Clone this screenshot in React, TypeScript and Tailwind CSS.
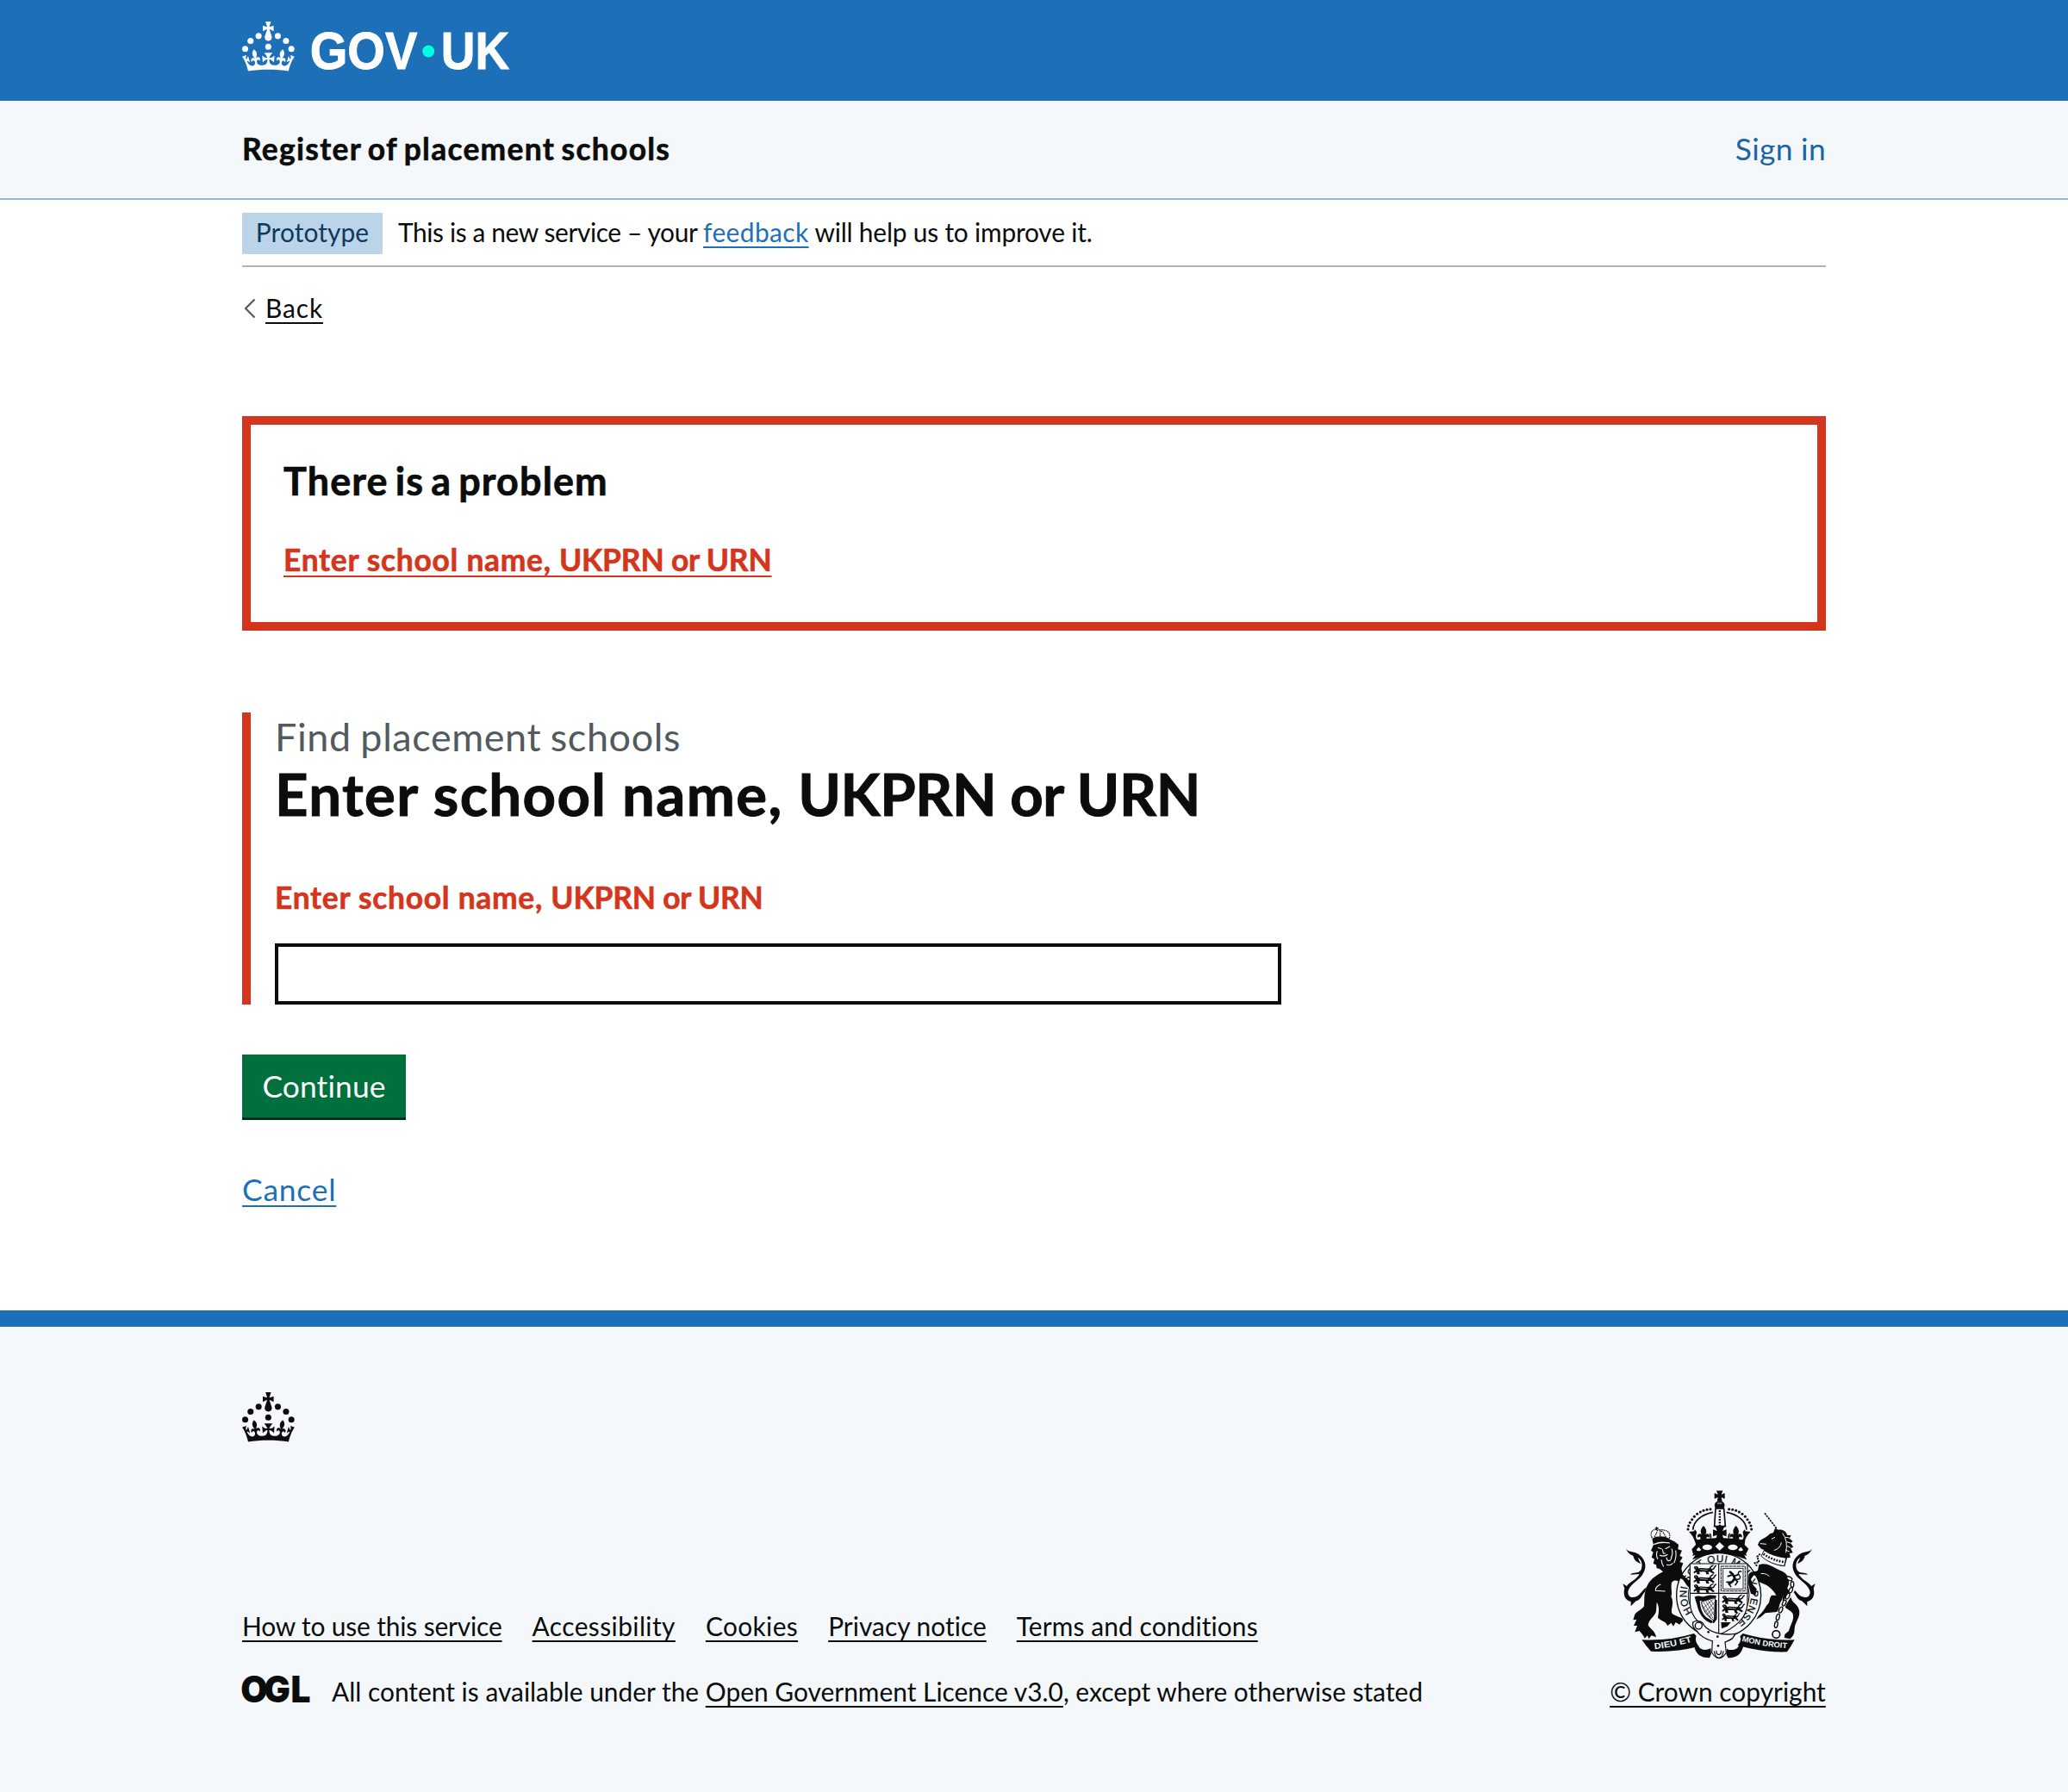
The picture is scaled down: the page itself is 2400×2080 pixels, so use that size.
import type { ReactNode } from 'react';

const CROWN =
  'M33.1,9.8c.2-.1.3-.3.5-.5l4.6,2.4v-6.8l-4.6,1.5c-.1-.2-.3-.3-.5-.5l1.9-5.9h-6.7l1.9,5.9c-.2.1-.3.3-.5.5l-4.6-1.5v6.8l4.6-2.4c.1.2.3.3.5.5l-2.6,8c-.9,2.8,1.2,5.7,4.1,5.7h0c3,0,5.1-2.9,4.1-5.7l-2.6-8ZM37,37.9s-3.4,3.8-4.1,6.1c2.2,0,4.2-.5,6.4-2.8l-.7,8.5c-2-2.8-4.4-4.1-5.7-3.8.1,3.1.5,6.7,5.8,7.2,3.7.3,6.7-1.5,7-3.8.4-2.6-2-4.3-3.7-1.6-1.4-4.5,2.4-6.1,4.9-3.2-1.9-4.5-1.8-7.7,2.4-10.9,3,4,2.6,7.3-1.2,11.1,2.4-1.3,6.2,0,4,4.6-1.2-2.8-3.7-2.2-4.2.2-.3,1.7.7,3.7,3,4.2,1.9.3,4.7-.9,7-5.9-1.3,0-2.4.7-3.9,1.7l2.4-8c.6,2.3,1.4,3.7,2.2,4.5.6-1.6.5-2.8,0-5.3l5,1.8c-2.6,3.6-5.2,8.7-7.3,17.5-7.4-1.1-15.7-1.7-24.5-1.7h0c-8.8,0-17.1.6-24.5,1.7-2.1-8.9-4.7-13.9-7.3-17.5l5-1.8c-.5,2.5-.6,3.7,0,5.3.8-.8,1.6-2.3,2.2-4.5l2.4,8c-1.5-1-2.6-1.7-3.9-1.7,2.3,5,5.2,6.2,7,5.9,2.3-.4,3.3-2.4,3-4.2-.5-2.4-3-3.1-4.2-.2-2.2-4.6,1.6-6,4-4.6-3.7-3.7-4.2-7.1-1.2-11.1,4.2,3.2,4.3,6.4,2.4,10.9,2.5-2.8,6.3-1.3,4.9,3.2-1.8-2.7-4.1-1-3.7,1.6.3,2.3,3.3,4.1,7,3.8,5.4-.5,5.7-4.2,5.8-7.2-1.3-.2-3.7,1-5.7,3.8l-.7-8.5c2.2,2.3,4.2,2.7,6.4,2.8-.7-2.3-4.1-6.1-4.1-6.1h10.6,0Z';

function CrownShapes() {
  return (
    <g>
      <circle cx="20" cy="17.6" r="3.7" />
      <circle cx="10.2" cy="23.5" r="3.7" />
      <circle cx="3.7" cy="33.2" r="3.7" />
      <circle cx="31.7" cy="30.6" r="3.7" />
      <circle cx="43.3" cy="17.6" r="3.7" />
      <circle cx="53.2" cy="23.5" r="3.7" />
      <circle cx="59.7" cy="33.2" r="3.7" />
      <path d={CROWN} />
    </g>
  );
}

function GovLogo() {
  return (
    <svg viewBox="0 0 324 60" className="block h-[57.45px] w-[310px] overflow-visible" fill="#fff" aria-label="GOV.UK">
      <CrownShapes />
      <g fontFamily="'Liberation Sans', Arial, sans-serif" fontWeight="700" fontSize="63.6" stroke="#fff" strokeWidth=".9">
        <text x="82.2" y="57.7" textLength="130.5" lengthAdjust="spacingAndGlyphs">GOV</text>
        <text x="241.2" y="57.7" textLength="83" lengthAdjust="spacingAndGlyphs">UK</text>
      </g>
      <circle cx="226" cy="36" r="7.3" fill="#00ffe0" />
    </svg>
  );
}

function OglLogo() {
  return (
    <svg viewBox="0 0 79 32" className="block h-8 w-[79px] shrink-0 overflow-visible" fill="#0b0c0c">
      <text
        x="-1.8 26 58.5"
        y="31.2"
        fontFamily="Inter, sans-serif"
        fontWeight="900"
        fontSize="42"
        transform="scale(.967 1)"
      >
        OGL
      </text>
    </svg>
  );
}

/* A passant lion reduced to a heraldic squiggle, about 80 units wide. */
function Passant({ x, y }: { x: number; y: number }) {
  return (
    <g transform={`translate(${x} ${y}) scale(1.02 1.12)`}>
      <path d="M4,6 C2,0 10,-3 16,1 L20,7 C32,3 44,9 56,6 C62,4 66,8 66,14 L74,20 L70,24 L58,17 L52,18 L56,25 L46,25 L44,18 C36,16 28,18 22,17 L24,25 L14,25 L13,18 L4,22 L2,18 L10,12 Z" />
      <path d="M64,10 C78,10 70,-2 80,-1 M58,6 C62,-3 70,0 68,-4" fill="none" stroke="#0b0c0c" strokeWidth="4" />
      <path d="M24,10 L50,12 M8,3 L13,6" stroke="#f4f8fb" strokeWidth="1.6" />
    </g>
  );
}

const BEADS: [number, number][] = [
  [297, 194], [299, 182], [304, 171], [311, 160], [319, 150], [329, 141], [340, 134], [351, 129], [363, 126], [375, 124],
];

function HalfCrown() {
  return (
    <g>
      {BEADS.map(([x, y]) => (
        <circle key={x} cx={x} cy={y} r="4.6" />
      ))}
      <path d="M314,196 C316,166 344,142 384,135" fill="none" stroke="#0b0c0c" strokeWidth="5" />
      <path d="M300,203 l18,-2 3,-6 6,8 c0,10 -4,12 -2,22 c3,8 14,10 16,0 c-2,-6 -9,-6 -10,0 c-5,-12 6,-20 13,-12 c-6,-12 -2,-22 7,-31 c9,9 13,19 7,31 c7,-8 18,0 13,12 c-1,-6 -8,-6 -10,0 c2,10 16,8 18,-4 c0,-10 -4,-12 -8,-14 L378,240 H322 C318,226 312,214 300,203 Z" />
    </g>
  );
}

function RoyalArms() {
  return (
    <svg viewBox="60 50 690 610" className="block h-[203.3px] w-[230px]" fill="#0b0c0c">
      <defs>
        <path id="garter" d="M313,484 A112,112 0 1 1 461,517" />
        <path id="motto-left" d="M181,612 Q250,604 314,585" />
        <path id="motto-right" d="M484,583 Q560,604 646,609" />
      </defs>

      {/* crown */}
      <path d="M396,60 h22 l-5,13 12,-5 v20 l-12,-5 3,14 h-18 l3,-14 -12,5 v-20 l12,5 Z" />
      <path d="M407,96 c18,0 21,16 14,26 h-28 c-7,-10 -4,-26 14,-26 Z" />
      <path d="M399,104 h16" stroke="#f4f8fb" strokeWidth="2.5" />
      <HalfCrown />
      <g transform="matrix(-1 0 0 1 815 0)">
        <HalfCrown />
      </g>
      <path d="M393,122 h29 l5,62 h-38 Z" fill="#f4f8fb" stroke="#0b0c0c" strokeWidth="5" />
      <path d="M407.500,128 V182" stroke="#0b0c0c" strokeWidth="7" strokeDasharray="6 4" />
      <path d="M392,184 h32 l-7,16 14,-5 v24 l-14,-5 6,22 h-31 l6,-22 -14,5 v-24 l14,5 Z" />
      <path d="M322,232 Q408,216 496,232 L494,248 508,262 500,278 Q408,286 314,278 L310,264 324,248 Z" />
      <path d="M328,276 Q408,266 488,276 L502,300 Q408,260 312,300 Z" />
      <g fill="#f4f8fb">
        <path d="M326,266 l8,-10 9,9 -8,9 Z M392,254 l15,-15 16,15 -16,14 Z M472,265 l9,-9 8,10 -9,8 Z" />
        <ellipse cx="364" cy="257" rx="17" ry="10" />
        <ellipse cx="453" cy="257" rx="17" ry="10" />
      </g>

      {/* lion */}
      <g>
        <path d="M80,262 C92,276 112,270 126,282 C154,304 154,332 136,356 C118,376 92,390 88,412 C88,428 100,436 118,428 C132,422 140,404 152,396 L148,410 C136,424 132,440 116,444 L98,462 98,446 C78,440 70,424 76,400 L70,384 84,392 C92,378 118,370 128,350 L96,352 C106,340 124,352 134,334 C140,318 136,300 122,292 L132,314 C116,308 108,298 106,286 C96,284 88,276 80,262 Z" />
        <path d="M178,246 L168,268 176,274 170,292 180,298 176,314 186,318 188,330 198,332 210,342 C188,354 168,366 156,388 C142,414 146,438 144,462 C136,474 122,478 112,490 L106,510 118,508 108,530 120,530 112,552 128,548 C136,558 144,566 146,574 L156,564 160,576 170,564 186,570 C184,550 166,542 158,528 C160,508 182,498 186,480 L188,448 C200,466 194,488 192,502 C206,516 218,512 226,530 L238,520 246,532 254,518 268,526 C274,516 284,516 276,504 C262,496 244,494 240,484 C238,466 250,452 238,428 C244,416 236,402 240,380 C252,366 262,376 276,380 L288,396 C298,406 312,406 318,396 L304,388 316,380 300,374 C286,362 276,348 274,330 L280,312 268,308 278,292 268,286 276,268 262,264 264,248 252,238 236,230 Z" />
        <path d="M172,226 Q200,212 232,226 L236,240 Q204,232 176,246 Z" />
        <path d="M172,224 C162,206 174,192 190,196 M232,226 C238,206 226,194 192,196 M180,222 q10,-20 12,-26 M220,222 q-8,-20 -24,-26 M200,218 v-20" fill="none" stroke="#0b0c0c" strokeWidth="3.5" strokeDasharray="5 2.500" />
        <path d="M188,186 v12 M182,191 h12" stroke="#0b0c0c" strokeWidth="4" />
      </g>
      <path
        d="M192,258 l14,5 M218,262 l16,-8 M208,264 l3,14 8,0 M198,284 q14,8 28,-2 M190,270 q-6,16 2,28 M240,262 q6,16 -2,32 M222,292 c2,16 14,16 18,0 M204,300 q2,16 8,24 M254,268 q4,24 -6,44 M222,318 q16,4 22,-6 M202,386 q-20,8 -18,22 l34,2 M178,247 q26,-10 56,-5"
        fill="none"
        stroke="#f4f8fb"
        strokeWidth="3.4"
      />

      {/* unicorn */}
      <path d="M564,138 L606,192" stroke="#0b0c0c" strokeWidth="5" strokeDasharray="7 3" />
      <path d="M540,248 L546,236 C556,226 570,224 582,210 L594,206 600,190 612,196 C632,194 640,206 642,214 L656,216 650,226 662,236 654,242 664,256 654,260 662,276 650,278 654,292 642,294 L634,324 C600,320 570,306 552,286 L562,266 552,262 Z" />
      <path d="M544,318 C566,308 588,322 614,336 C642,346 650,362 648,386 C640,410 628,420 624,440 C612,456 616,474 606,482 L566,486 550,500 534,508 544,494 C562,480 566,464 574,456 C584,446 578,436 588,424 L604,424 C594,404 574,388 556,382 C540,378 530,362 524,352 L516,368 524,388 536,402 532,428 516,418 506,382 508,352 C516,336 532,344 540,338 Z" />
      <path d="M640,396 C656,414 650,432 664,448 C682,462 690,478 682,500 L670,528 C666,546 670,556 660,568 L652,576 632,572 634,560 648,548 C654,524 668,510 662,488 C654,474 638,474 630,458 C622,440 628,420 640,396 Z" />
      <path d="M730,262 C718,276 698,270 684,282 C656,304 656,332 674,356 C692,376 718,390 722,412 C722,428 710,436 692,428 C678,422 670,404 658,396 L662,410 C674,424 678,440 694,444 L712,462 712,446 C732,440 740,424 734,400 L740,384 726,392 C718,378 692,370 682,350 L714,352 C704,340 686,352 676,334 C670,318 674,300 688,292 L678,314 C694,308 702,298 704,286 C714,284 722,276 730,262 Z" />
      <path
        d="M588,228 l12,-6 M548,244 l22,2 M626,208 q20,26 12,68 M636,222 l14,2 M640,238 l14,4 M640,252 l14,6 M636,266 l14,6 M596,268 q24,-8 26,-28 M540,352 q24,-10 40,6"
        fill="none"
        stroke="#f4f8fb"
        strokeWidth="3"
      />
      <path d="M562,268 q30,20 76,26 l-6,28 q-50,-6 -80,-34 Z" fill="#f4f8fb" stroke="#0b0c0c" strokeWidth="2.500" />
      <path d="M560,280 q30,22 72,28" strokeWidth="8" strokeDasharray="5 5" fill="none" stroke="#0b0c0c" />
      <path d="M548,280 l-10,10 6,18 -14,4 8,12" strokeWidth="6" strokeDasharray="6 3" fill="none" stroke="#0b0c0c" />
      <path d="M648,356 C672,370 670,400 652,420 C632,450 610,490 606,540" strokeWidth="15" stroke="#f4f8fb" fill="none" />
      <g fill="#f4f8fb" stroke="#0b0c0c" strokeWidth="4">
        <ellipse cx="650" cy="366" rx="10" ry="6" transform="rotate(30 650 366)" />
        <ellipse cx="660" cy="386" rx="5.500" ry="10" />
        <ellipse cx="655" cy="406" rx="5.500" ry="10" transform="rotate(25 655 406)" />
        <ellipse cx="644" cy="427" rx="5.500" ry="11" transform="rotate(28 644 427)" />
        <ellipse cx="632" cy="451" rx="5.500" ry="11" transform="rotate(24 632 451)" />
        <ellipse cx="620" cy="475" rx="5.500" ry="11" transform="rotate(24 620 475)" />
        <ellipse cx="610" cy="500" rx="5.500" ry="11" transform="rotate(16 610 500)" />
        <ellipse cx="604" cy="526" rx="5.500" ry="11" transform="rotate(10 604 526)" />
        <circle cx="604" cy="560" r="13" strokeWidth="5" />
      </g>

      {/* garter */}
      <circle cx="404" cy="424" r="147" fill="#f4f8fb" stroke="#0b0c0c" strokeWidth="4" />
      <circle cx="404" cy="424" r="106" fill="none" stroke="#0b0c0c" strokeWidth="3" />
      <text fontFamily="'Liberation Sans', sans-serif" fontSize="35" stroke="#0b0c0c" strokeWidth=".8">
        <textPath href="#garter" textLength="532">HONI SOIT QUI MAL Y PENSE</textPath>
      </text>
      <path d="M312,286 L320,270 H494 L502,286 Q408,262 312,286 Z" />
      <path d="M238,362 C256,356 268,364 280,370 L292,388 C300,398 312,404 318,394 L306,386 318,380 300,372 C286,362 278,350 266,340 Z M508,352 C516,336 532,344 548,338 L556,370 L526,354 516,368 524,388 536,402 532,424 516,418 506,382 Z" />

      {/* shield */}
      <path d="M304,314 H504 V452 C502,504 462,536 404,562 C346,536 306,504 304,452 Z" fill="#f4f8fb" stroke="#0b0c0c" strokeWidth="3.500" />
      <path d="M404,314 V558 M304,417 H504" stroke="#0b0c0c" strokeWidth="3.500" />
      <Passant x={314} y={323} />
      <Passant x={314} y={355} />
      <Passant x={314} y={387} />
      <Passant x={413} y={426} />
      <Passant x={413} y={457} />
      <g transform="translate(413 488) scale(.8 .95)">
        <Passant x={0} y={0} />
      </g>
      <path d="M412,518 h34 l-12,14 -20,8 Z" />
      <rect x="412" y="323" width="84" height="86" fill="none" stroke="#0b0c0c" strokeWidth="3" strokeDasharray="12 2" />
      <rect x="419" y="330" width="70" height="72" fill="none" stroke="#0b0c0c" strokeWidth="2.500" />
      <g fill="none" stroke="#0b0c0c" strokeLinecap="round" strokeLinejoin="round">
        <path d="M444,343 L452,350 460,364 452,376 440,384" strokeWidth="8" />
        <path d="M456,358 L472,352 M454,352 L436,358 M458,368 L470,376 462,388 M446,378 L432,378 M440,384 L446,394" strokeWidth="5" />
        <path d="M464,368 C480,372 482,360 474,352 C468,344 478,338 482,342" strokeWidth="4" />
      </g>
      <path d="M320,430 c12,-8 22,2 34,-2 c14,-6 30,-6 42,-2 l-4,10 c-14,-4 -22,2 -30,6 c-10,4 -16,2 -24,0 c2,28 8,44 22,58 l24,14 -6,8 c-26,-10 -44,-34 -50,-66 Z" />
      <path d="M344,446 L392,432 L388,512 C364,498 346,474 344,446 Z" fill="#f4f8fb" stroke="#0b0c0c" strokeWidth="3" />
      <path d="M350,446 L384,504 M358,442 L388,494 M366,440 L388,476 M374,438 L389,460 M346,458 L376,502 M392,432 L348,470 M392,446 L354,484 M390,462 L362,492 M390,478 L370,500" stroke="#0b0c0c" strokeWidth="1.800" />
      <path d="M394,440 v66 l-10,14" fill="none" stroke="#0b0c0c" strokeWidth="7" />

      {/* scroll */}
      <path d="M136,579 Q230,584 318,557 L326,566 Q318,580 334,602 Q250,624 168,619 Q150,600 136,579 Z" />
      <path d="M668,579 Q580,584 488,557 L478,567 Q486,582 470,598 Q560,624 642,621 Q656,602 668,579 Z" />
      <path d="M318,596 C322,628 340,642 372,642 L378,628 376,608 C356,620 336,612 334,600 Z M490,598 C484,630 466,642 436,642 L430,628 432,610 C450,620 470,612 474,598 Z" />
      <g fontFamily="'Liberation Sans', sans-serif" fontWeight="700" fill="#f4f8fb" fontSize="30">
        <text>
          <textPath href="#motto-left" textLength="132" lengthAdjust="spacingAndGlyphs">DIEU ET</textPath>
        </text>
        <text fontSize="27">
          <textPath href="#motto-right" textLength="160" lengthAdjust="spacingAndGlyphs">MON DROIT</textPath>
        </text>
      </g>

      {/* garter buckle and tail */}
      <path d="M314,518 C330,508 348,516 352,528 C370,550 410,566 462,558 L452,574 C440,584 428,584 420,592 C372,584 340,570 328,548 C318,542 312,530 314,518 Z" fill="#f4f8fb" stroke="#0b0c0c" strokeWidth="4" />
      <circle cx="334" cy="530" r="12" fill="none" stroke="#0b0c0c" strokeWidth="4" />
      <path d="M382,582 L380,624 Q404,662 430,624 L426,586" fill="#f4f8fb" stroke="#0b0c0c" strokeWidth="3.500" />
      <path d="M388,618 Q392,642 404,642 Q418,642 420,618 M396,616 v10 q8,10 16,0 v-10" fill="none" stroke="#0b0c0c" strokeWidth="3.500" />
      <circle cx="368" cy="552" r="4" />
      <circle cx="400" cy="568" r="4" />
      <circle cx="402" cy="600" r="4" />
    </svg>
  );
}

function Link({ className = '', children }: { className?: string; children: ReactNode }) {
  return (
    <a
      href="#"
      className={`underline decoration-2 underline-offset-[5px] [text-decoration-skip-ink:none] ${className}`}
    >
      {children}
    </a>
  );
}

function Container({ className = '', children }: { className?: string; children: ReactNode }) {
  return <div className={`mx-auto w-[1838px] ${className}`}>{children}</div>;
}

const footerLinks = [
  { label: 'How to use this service', tracking: 'tracking-[-0.15px]' },
  { label: 'Accessibility', tracking: 'tracking-[0.41px]' },
  { label: 'Cookies', tracking: 'tracking-[0.37px]' },
  { label: 'Privacy notice', tracking: 'tracking-[0.02px]' },
  { label: 'Terms and conditions', tracking: 'tracking-[0.11px]' },
];

export default function App() {
  return (
    <div className="flex min-h-[2080px] w-[2400px] flex-col bg-white font-['Lato',sans-serif] text-[#0b0c0c]">
      <header>
        <div className="h-[117px] bg-[#1d70b8] pt-[25px]">
          <Container>
            <GovLogo />
          </Container>
        </div>
        <div className="h-[115px] border-b-2 border-[#8eb8dc] bg-[#f4f8fb] pt-8">
          <Container className="flex justify-between text-[35.4px] leading-[48px]">
            <span className="font-bold tracking-[1.29px] [-webkit-text-stroke:0.6px] [word-spacing:-2.5px]">
              Register of placement schools
            </span>
            <a href="#" className="tracking-[0.32px] text-[#1a65a6]">Sign in</a>
          </Container>
        </div>
      </header>

      <Container className="text-[29.9px]">
        <div className="flex h-[78px] items-start gap-[18px] border-b-2 border-[#b1b4b6] pt-[15px]">
          <strong className="h-12 w-[163px] bg-[#bbd4ea] text-center font-normal leading-[45px] tracking-[0.1px] text-[#0f385c]">
            Prototype
          </strong>
          <p className="whitespace-pre leading-[45px]">
            <span className="tracking-[-0.39px]">This is a new service – your </span>
            <Link className="tracking-[0.4px] text-[#1d70b8]">feedback</Link>
            <span className="tracking-[-0.2px]"> will help us to improve it.</span>
          </p>
        </div>
        <div className="mt-[27px] flex h-10 items-center leading-10">
          <svg viewBox="0 0 14 24" className="ml-[2px] mr-[11px] mt-[2px] h-6 w-[14px]" fill="none" stroke="#505a5f" strokeWidth="2.2">
            <path d="M12.500 1.500 2 12l10.500 10.500" />
          </svg>
          <Link className="tracking-[0.89px]">Back</Link>
        </div>
      </Container>

      <Container className="mt-[106px]">
        <section className="h-[249px] border-10 border-[#d4351c] pl-[38px] pt-[37px]">
          <h2 className="text-[44.9px] font-bold leading-[56px] tracking-[1.15px] [-webkit-text-stroke:0.7px] [word-spacing:-4px]">
            There is a problem
          </h2>
          <p className="mt-10 text-[35.4px] font-bold leading-[48px] text-[#d4351c] [-webkit-text-stroke:0.6px]">
            <Link>
              <span className="tracking-[0.7px]">Enter school name, </span>
              <span className="tracking-[-0.18px]">UKPRN or URN</span>
            </Link>
          </p>
        </section>

        <form className="mt-[95px]">
          <div className="h-[339px] border-l-10 border-[#d4351c] pl-7">
            <span className="block text-[44.9px] leading-[56px] tracking-[0.62px] text-[#505a5f] [word-spacing:-1.5px]">
              Find placement schools
            </span>
            <h1 className="text-[67.1px] font-bold leading-[76px] [-webkit-text-stroke:1px]">
              <span className="tracking-[1.36px]">Enter school name, </span>
              <span className="tracking-[-0.4px]">UKPRN or URN</span>
            </h1>
            <p className="mt-[59px] text-[35.4px] font-bold leading-[48px] text-[#d4351c] [-webkit-text-stroke:0.6px]">
              <span className="tracking-[0.72px]">Enter school name, </span>
              <span className="tracking-[-0.2px]">UKPRN or URN</span>
            </p>
            <input type="text" className="mt-[29px] block h-[71px] w-[1168px] border-4 border-[#0b0c0c] bg-white" />
          </div>
          <button
            type="button"
            className="mt-[58px] block h-[76px] w-[190px] border-b-[3px] border-[#002d18] bg-[#00703c] text-[35.4px] tracking-[0.12px] text-white"
          >
            Continue
          </button>
          <p className="mt-[57px] text-[35.4px] leading-[48px] tracking-[0.78px] text-[#1d70b8]">
            <Link>Cancel</Link>
          </p>
        </form>
      </Container>

      <footer className="mt-[116px] flex-1 border-t-[19px] border-[#1d70b8] bg-[#f4f8fb] pt-[76px]">
        <Container>
          <svg viewBox="0 0 64 60" className="block h-[57.45px] w-[61.3px] overflow-visible" fill="#0b0c0c">
            <CrownShapes />
          </svg>
          <div className="mt-[54px] flex items-end justify-between text-[29.9px] leading-10">
            <div>
              <nav className="flex gap-[35px]">
                {footerLinks.map((link) => (
                  <Link key={link.label} className={link.tracking}>{link.label}</Link>
                ))}
              </nav>
              <div className="mt-9 flex items-start gap-[25px]">
                <div className="pt-[2px]">
                  <OglLogo />
                </div>
                <p className="whitespace-pre">
                  <span>All content is available under the </span>
                  <Link>Open Government Licence v3.0</Link>, except where otherwise stated
                </p>
              </div>
            </div>
            <div className="flex w-[251px] flex-col items-center">
              <div className="pl-[2px]">
                <RoyalArms />
              </div>
              <p className="mt-3">
                <Link>© Crown copyright</Link>
              </p>
            </div>
          </div>
        </Container>
      </footer>
    </div>
  );
}
